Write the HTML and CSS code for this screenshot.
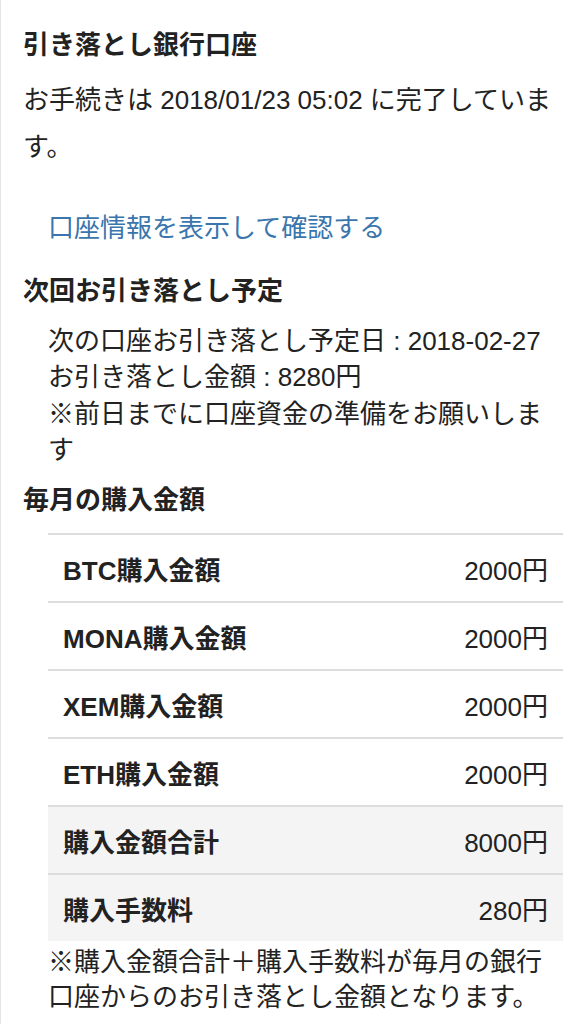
FILE: index.html
```html
<!DOCTYPE html>
<html lang="ja">
<head>
  <meta charset="UTF-8">
  <meta name="viewport" content="width=device-width, initial-scale=1.0">
  <title>引き落とし銀行口座</title>
  <link rel="stylesheet" href="styles.css">
</head>
<body>
  <div class="page">
    <h3 class="section-title">引き落とし銀行口座</h3>
    <p class="done-note">お手続きは 2018/01/23 05:02 に完了しています。</p>
    <a class="account-link" href="#">口座情報を表示して確認する</a>

    <h3 class="section-title next-title">次回お引き落とし予定</h3>
    <div class="schedule">
      次の口座お引き落とし予定日 : 2018-02-27<br>
      お引き落とし金額 : 8280円<br>
      ※前日までに口座資金の準備をお願いします
    </div>

    <h3 class="section-title monthly-title">毎月の購入金額</h3>
    <div class="amount-table">
      <div class="amount-row">
        <span class="amount-label">BTC購入金額</span>
        <span class="amount-value">2000円</span>
      </div>
      <div class="amount-row">
        <span class="amount-label">MONA購入金額</span>
        <span class="amount-value">2000円</span>
      </div>
      <div class="amount-row">
        <span class="amount-label">XEM購入金額</span>
        <span class="amount-value">2000円</span>
      </div>
      <div class="amount-row">
        <span class="amount-label">ETH購入金額</span>
        <span class="amount-value">2000円</span>
      </div>
      <div class="amount-row total">
        <span class="amount-label">購入金額合計</span>
        <span class="amount-value">8000円</span>
      </div>
      <div class="amount-row total">
        <span class="amount-label">購入手数料</span>
        <span class="amount-value">280円</span>
      </div>
    </div>
    <p class="footnote">※購入金額合計＋購入手数料が毎月の銀行口座からのお引き落とし金額となります。</p>
  </div>
</body>
</html>
```

FILE: styles.css
```css
body {
  margin: 0;
  background: #ffffff;
  font-family: 'Liberation Sans', 'Noto Sans CJK JP', sans-serif;
  font-size: 26px;
  color: #222;
}
.page {
  border-left: 1px solid #e4e4e4;
  padding: 28px 18px 0 22px;
  min-height: 100vh;
  box-sizing: border-box;
}
.section-title {
  margin: 0;
  font-size: 26px;
  line-height: 34px;
  font-weight: bold;
  color: #222;
}
.done-note {
  margin: 14.5px 0 0;
  line-height: 47px;
}
.account-link {
  display: block;
  margin: 39.5px 0 0 25px;
  line-height: 36px;
  color: #3a76ad;
  text-decoration: none;
}
.next-title {
  margin-top: 28px;
}
.schedule {
  margin: 14.75px 0 0 25px;
  line-height: 36.5px;
}
.monthly-title {
  margin-top: 14.25px;
}
.amount-table {
  margin: 16px 0 0 25px;
}
.amount-row {
  display: flex;
  justify-content: space-between;
  align-items: center;
  height: 66px;
  padding: 0 15px;
  border-top: 2px solid #dddddd;
}
.amount-row.total {
  background: #f4f4f4;
}
.amount-label {
  font-weight: bold;
}
.footnote {
  margin: 3.5px 0 0 25px;
  line-height: 35px;
}
```
